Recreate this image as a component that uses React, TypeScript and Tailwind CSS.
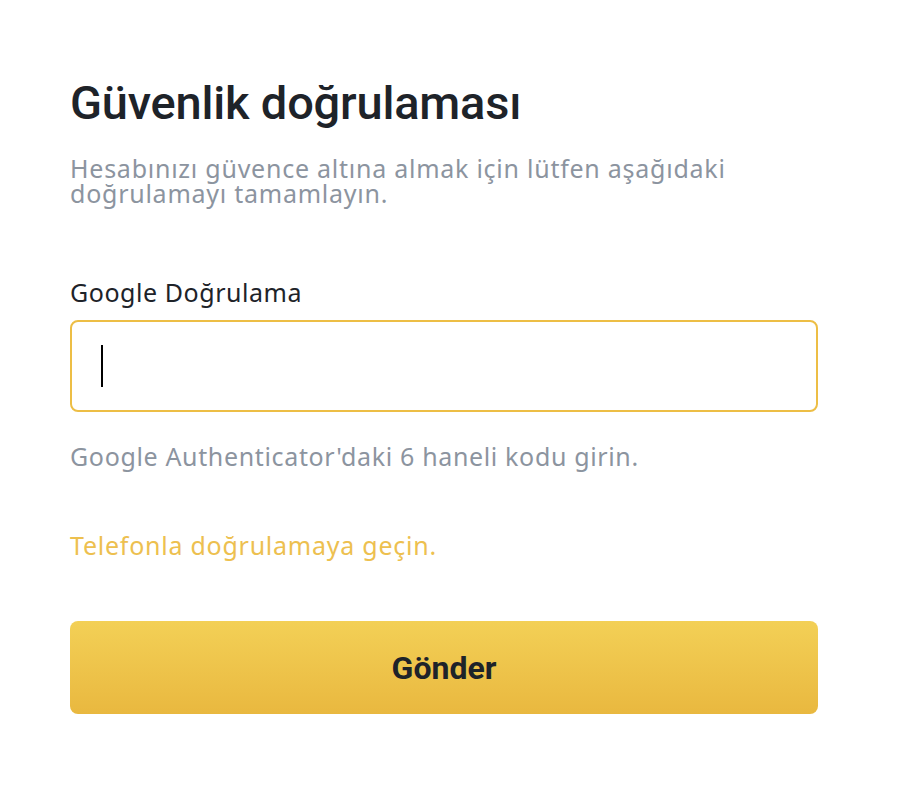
import React from 'react';

const App: React.FC = () => {
  return (
    <div className="min-h-screen bg-white font-['Noto_Sans',_'Roboto',_sans-serif]">
      <div className="w-[748px] ml-[70px] pt-[75px]">
        {/* Header */}
        <h1 className="font-['Roboto',_sans-serif] text-[47px] leading-[56px] font-medium text-[#1E2329] tracking-[-0.2px]">
          Güvenlik doğrulaması
        </h1>
        <p className="mt-[25px] text-[25px] leading-[25px] tracking-[0.75px] text-[#8C949F]">
          Hesabınızı güvence altına almak için lütfen aşağıdaki
          <br />
          doğrulamayı tamamlayın.
        </p>

        {/* Google code */}
        <label className="block mt-[70px] text-[25px] leading-[32px] tracking-[0.55px] text-[#1E2329]">
          Google Doğrulama
        </label>
        <div className="mt-[12px] h-[92px] rounded-[8px] border-2 border-[#EDBE45] flex items-center pl-[29px]">
          <span className="w-[2px] h-[42px] bg-black" />
        </div>
        <p className="mt-[28px] text-[25px] leading-[32px] tracking-[0.65px] text-[#8C949F]">
          Google Authenticator'daki 6 haneli kodu girin.
        </p>

        <a className="block mt-[57px] text-[25px] leading-[32px] tracking-[0.75px] text-[#EDC04F] cursor-pointer">
          Telefonla doğrulamaya geçin.
        </a>

        <button className="mt-[60px] w-full h-[93px] rounded-[8px] bg-gradient-to-b from-[#F3D056] to-[#E9B83F] font-['Roboto',_sans-serif] text-[32px] font-bold text-[#1E2329]">
          Gönder
        </button>
      </div>
    </div>
  );
};

export default App;
